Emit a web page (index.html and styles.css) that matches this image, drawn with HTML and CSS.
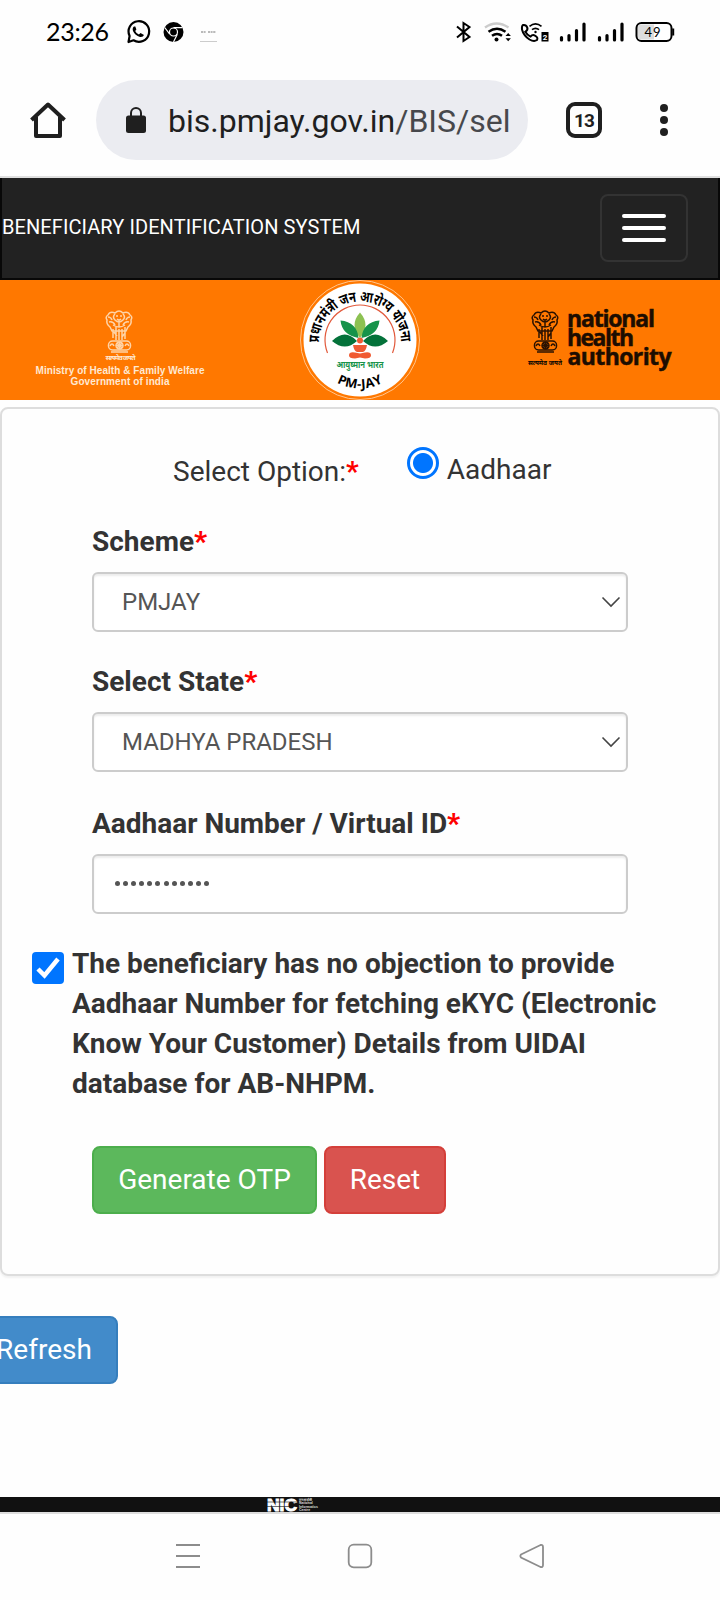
FILE: index.html
```
<!doctype html>
<html lang="en">
<head>
<meta charset="utf-8">
<title>Beneficiary Identification System</title>
<link rel="stylesheet" href="styles.css">
</head>
<body>
<div class="statusbar">
	<span class="clock">23:26</span>
	<svg class="status-left" width="94" height="26" viewBox="126 19 94 26">
		<!-- whatsapp -->
		<path d="M128.500 42 L129.600 36 A10.300 10.300 0 1 1 133.500 40.300 Z" fill="none" stroke="#000" stroke-width="2.200" stroke-linejoin="round"/>
		<path d="M134 26.500 q-2 1.500 -1 4.500 q2 4.500 7 6 q3 .5 4 -2 l-3.500 -2 -1.600 1.500 q-2.600 -1 -3.700 -3.600 l1.200 -1.500 -1.100 -2.900z"/>
		<!-- chrome -->
		<circle cx="173.500" cy="32" r="10"/>
		<circle cx="173.500" cy="32" r="4" fill="none" stroke="#fff" stroke-width="1.200"/>
		<path d="M173.500 27.600 H182.500 M169.700 34.200 L164.700 27.500 M177.300 34.300 L173.500 42" stroke="#fff" stroke-width="1.200"/>
		<path d="M201 32 h5 M208 32 h8" stroke="#777" stroke-width="1.200" stroke-dasharray="2 .6"/>
		<path d="M200 41.500 h17" stroke="#ccc"/>
	</svg>
	<svg class="status-right" width="222" height="26" viewBox="454 19 222 26">
		<path d="M457 26.500 L469.500 37 L463.500 41 V23 L469.500 27 L457 37.500" fill="none" stroke="#000" stroke-width="2"/>
		<!-- wifi -->
		<g fill="none" stroke-width="2.400">
			<path d="M485 27.500 Q496.500 19.500 508.500 27.500" stroke="#ccc"/>
			<path d="M488.500 31.800 Q497 25.500 505.500 31.800" stroke="#000"/>
			<path d="M492 35.800 Q497 32 502 35.800" stroke="#000"/>
		</g>
		<circle cx="496.500" cy="39.500" r="2"/>
		<path d="M505.500 36 l2.700 -3 2.700 3z M505.500 38.200 l2.700 3 2.700 -3z"/>
		<!-- wifi calling -->
		<path d="M523 25 q3 -.6 4.300 2.600 q.8 2.400 -2 4.200 q1.800 3.200 5.200 4.800 q2 -2.500 4.500 -1 q3.400 1.800 2 4.400 q-3 2 -7.500 -.5 q-6 -4 -7.500 -10 q-.4 -3.500 1 -4.500z" fill="none" stroke="#000" stroke-width="2"/>
		<path d="M529.500 26.300 Q535.500 21.500 541.500 26.300 M532 29.700 Q535.500 27 539 29.700" fill="none" stroke="#000" stroke-width="1.700"/>
		<circle cx="535.500" cy="32" r="1.200"/>
		<rect x="541.500" y="32" width="7" height="9.500"/>
		<text x="542.800" y="40" class="sim">2</text>
		<g stroke="#000" stroke-width="3.200" stroke-linecap="round">
			<path d="M561.500 37.500 V40 M569 35.500 V40 M576.500 30.500 V40 M584 24 V40"/>
			<path d="M599.500 37.500 V40 M607 35.500 V40 M614.500 30.500 V40 M622 24 V40"/>
		</g>
		<rect x="636.500" y="23" width="35" height="18" rx="5" fill="#fff" stroke="#000" stroke-width="2"/>
		<path d="M641 24.500 h13 v15 h-13 q-3 0 -3 -3 v-9 q0 -3 3 -3z" fill="#ddd"/>
		<path d="M673.200 28.500 V35.500" stroke="#000" stroke-width="2"/>
		<text x="644.500" y="36.500" class="battery" textLength="16">49</text>
	</svg>
</div>

<div class="browserbar">
	<svg class="home" width="36" height="36" viewBox="0 0 36 36">
		<path d="M1.500 18 L18 2.500 L34.500 18 M6 15 V34 H30 V15" fill="none" stroke="#1f1f1f" stroke-width="4" stroke-linejoin="round"/>
	</svg>
	<div class="url">
		<svg width="20" height="26" viewBox="0 0 20 26">
			<path d="M5 10 V6 a5 5 0 0 1 10 0 V10" fill="none" stroke="#1f1f1f" stroke-width="2"/>
			<rect y="8.500" width="20" height="17.500" rx="2.500" fill="#1f1f1f"/>
		</svg>
		<span class="address">bis.pmjay.gov.in<span class="path">/BIS/sel</span></span>
	</div>
	<div class="tabs">13</div>
	<div class="more"><i></i><i></i><i></i></div>
</div>

<div class="navbar">
	<span class="brand">BENEFICIARY IDENTIFICATION SYSTEM</span>
	<div class="toggle"><i></i><i></i><i></i></div>
</div>

<svg class="banner" width="720" height="120" viewBox="0 280 720 120">
	<defs>
		<path id="arcTop" d="M319 342.500 A41 41 0 0 1 401 342.500"/>
		<path id="arcBottom" d="M311.500 340 A48.500 48.500 0 0 0 408.500 340"/>
		<!-- lion capital -->
		<g id="emblem" fill="none" stroke-width="1.500">
			<path d="M10 3 q4 -4 8 0 q5 -2 7 2 q3 2 1 5 q1 4 -3 7 l-2 4 h-14 l-2 -4 q-4 -3 -3 -7 q-2 -3 1 -5 q2 -4 7 -2z"/>
			<path d="M10 4 q-3 3 0 6 q4 4 8 0 q3 -3 0 -6 M11 6 h2 M15 6 h2 M12 9 q2 2 4 0 M3 7 q3 0 4 3 M25 7 q-3 0 -4 3 M4 12 q4 -1 6 3 M24 12 q-4 -1 -6 3 M8 15 q6 4 12 0 M14 10 v7"/>
			<path d="M8 19 v9 M11 17 v13 M14 19 v11 M17 19 v11 M20 17 v12 M9 22 l3 4 M20 23 l-3 4"/>
			<rect x="3.500" y="31" width="22" height="9" rx="4"/>
			<circle cx="14.500" cy="35.500" r="3.500"/>
			<path d="M14.500 32 v7 M11 35.500 h7 M12 33 l5 5 M17 33 l-5 5 M5 36 q2 -4 4 0 M20 36 q2 -4 4 0 M6 42 h17"/>
		</g>
	</defs>
	<rect y="280" width="720" height="120" fill="#ff7800"/>

	<g fill="#ffe9d2" text-anchor="middle">
		<use href="#emblem" x="105" y="310" stroke="#ffd3a6"/>
		<text x="120.500" y="360" class="motto" textLength="30">सत्यमेव जयते</text>
		<text x="120" y="374" class="ministry" textLength="169">Ministry of Health &amp; Family Welfare</text>
		<text x="120" y="384.500" class="ministry" textLength="99">Government of india</text>
	</g>

	<circle cx="360" cy="340" r="59.500" fill="none" stroke="#ffc58e" stroke-width="1"/>
	<circle cx="360" cy="340" r="56.500" fill="#fff"/>
	<path d="M327.500 353 A35 35 0 1 1 392.500 353" fill="none" stroke="#e2593b" stroke-width="1.200"/>
	<text class="yojana"><textPath href="#arcTop" textLength="128" lengthAdjust="spacingAndGlyphs">प्रधानमंत्री जन आरोग्य योजना</textPath></text>
	<text class="pmjay"><textPath href="#arcBottom" startOffset="50%" text-anchor="middle">PM-JAY</textPath></text>
	<path d="M360 312.500 Q349 325 360 338 Q371 325 360 312.500z" fill="#8cc152"/>
	<path d="M358.500 338 Q357 322 340.500 320.500 Q342 335 358.500 338z M361.500 338 Q363 322 379.500 320.500 Q378 335 361.500 338z" fill="#16934a"/>
	<path d="M357 341 Q345 328 332 341 Q345 352 357 341z M363 341 Q375 328 388 341 Q375 352 363 341z" fill="#04723a"/>
	<circle cx="360" cy="340.500" r="3" fill="#f05a32"/>
	<path d="M353 345 h14 q-1 6 -4 7 h-6 q-3 -1 -4 -7z M349 355.500 q0 -4 6 -3 l5 1 5 -1 q6 -1 6 3 q0 3 -6 3 l-5 -1 -5 1 q-6 0 -6 -3z" fill="#f05a32"/>
	<text x="360" y="368" class="bharat" text-anchor="middle" textLength="47" lengthAdjust="spacingAndGlyphs">आयुष्मान भारत</text>

	<use href="#emblem" x="531" y="310" stroke="#2a1200"/>
	<text x="545" y="365" class="motto" text-anchor="middle" textLength="34" lengthAdjust="spacingAndGlyphs">सत्यमेव जयते</text>
	<g class="nha">
		<text x="567" y="327" textLength="88">national</text>
		<text x="567" y="346" textLength="67">health</text>
		<text x="567.500" y="365" textLength="104">authority</text>
	</g>
</svg>

<form class="panel">
	<div class="option">
		<span>Select Option:<b class="req">*</b></span>
		<span class="radio"></span>
		<span class="radio-label">Aadhaar</span>
	</div>
	<div class="group">
		<label>Scheme<b class="req">*</b></label>
		<div class="control select">PMJAY
			<svg width="20" height="12" viewBox="0 0 20 12"><path d="M1.500 1.500 L10 10 L18.500 1.500"/></svg>
		</div>
	</div>
	<div class="group state">
		<label>Select State<b class="req">*</b></label>
		<div class="control select">MADHYA PRADESH
			<svg width="20" height="12" viewBox="0 0 20 12"><path d="M1.500 1.500 L10 10 L18.500 1.500"/></svg>
		</div>
	</div>
	<div class="group">
		<label>Aadhaar Number / Virtual ID<b class="req">*</b></label>
		<div class="control password"><i></i><i></i><i></i><i></i><i></i><i></i><i></i><i></i><i></i><i></i><i></i><i></i></div>
	</div>
	<div class="consent">
		<svg width="32" height="32" viewBox="0 0 32 32">
			<rect width="32" height="32" rx="4" fill="#0075ff"/>
			<path d="M6 17 L12.500 23.500 L26 7" fill="none" stroke="#fff" stroke-width="4.500"/>
		</svg>
		<p>The beneficiary has no objection to provide<br>Aadhaar Number for fetching eKYC (Electronic<br>Know Your Customer) Details from UIDAI<br>database for AB-NHPM.</p>
	</div>
	<div class="buttons">
		<button type="button" class="btn success">Generate OTP</button>
		<button type="button" class="btn danger">Reset</button>
	</div>
</form>

<button type="button" class="btn primary">Refresh</button>

<div class="footer">
	<svg width="56" height="15" viewBox="0 0 56 15">
		<text x="1" y="13.500" class="nic" textLength="30" lengthAdjust="spacingAndGlyphs">NIC</text>
		<path d="M0 5 h32 M0 9.500 h32" stroke="#111" stroke-width=".6"/>
		<g class="nic-small">
			<text x="33" y="3.500">एनआईसी</text>
			<text x="33" y="7">National</text>
			<text x="33" y="10.500">Informatics</text>
			<text x="33" y="14">Centre</text>
		</g>
	</svg>
</div>

<div class="softkeys">
	<svg width="26" height="26" viewBox="0 0 26 26"><path d="M1 2 H25 M1 13 H25 M1 24 H25"/></svg>
	<svg width="26" height="26" viewBox="0 0 26 26"><rect x="1.700" y="1.700" width="22.600" height="22.600" rx="5"/></svg>
	<svg width="26" height="26" viewBox="0 0 26 26"><path d="M2 11.500 L21.500 2 Q24 1.500 24 4 V22 Q24 24.500 21.500 24 L2 14.500 Q.8 13 2 11.500z"/></svg>
</div>
</body>
</html>
```
FILE: styles.css
```
* {box-sizing: border-box;}
body {
	margin: 0;
	width: 720px;
	height: 1600px;
	overflow: hidden;
	background: #fefefe;
	color: #333;
	font: 28px/40px Roboto, "Liberation Sans", sans-serif;
}
svg {display: block; flex: none;}
/* ---------- status bar ---------- */
.statusbar {
	display: flex;
	align-items: center;
	height: 64px;
	padding: 0 44px 0 46px;
	color: #000;
}
.clock {
	width: 80px;
	margin-top: -2px;
	font-family: Lato, Roboto, sans-serif;
	font-size: 25px;
	letter-spacing: -0.3px;
	white-space: nowrap;
}
.status-right {margin-left: auto;}
.sim {font: bold 8px Roboto, sans-serif; fill: #fff;}
.battery {font: 13px Lato, sans-serif;}
/* ---------- browser bar ---------- */
.browserbar {
	display: flex;
	align-items: center;
	height: 114px;
	border-bottom: 2px solid #e0e0e0;
	padding-left: 30px;
}
.url {
	display: flex;
	align-items: center;
	width: 432px;
	height: 80px;
	margin-left: 30px;
	padding-left: 30px;
	border-radius: 40px;
	background: #ebecf1;
}
.address {
	margin: 2px 0 0 22px;
	color: #1f1f1f;
	font-size: 32px;
	white-space: nowrap;
}
.path {color: #47484c;}
.tabs {
	width: 36px;
	height: 36px;
	margin-left: 38px;
	border: 4px solid #1f1f1f;
	border-radius: 9px;
	color: #1f1f1f;
	font-size: 19px;
	font-weight: bold;
	line-height: 29px;
	letter-spacing: -0.8px;
	text-align: center;
}
.more {
	display: flex;
	flex-direction: column;
	gap: 4px;
	margin-left: 58px;
}
.more i {
	width: 8px;
	height: 8px;
	border-radius: 50%;
	background: #1f1f1f;
}
/* ---------- page header ---------- */
.navbar {
	display: flex;
	justify-content: space-between;
	height: 102px;
	padding: 14px 30px 0 0;
	background: #222;
	border: solid #080808;
	border-width: 0 2px 2px;
}
.brand {
	padding-top: 15px;
	color: #fff;
	font-size: 20px;
	letter-spacing: 0.08px;
}
.toggle {
	display: flex;
	flex-direction: column;
	gap: 8px;
	width: 88px;
	height: 68px;
	margin-top: 2px;
	padding: 18px 20px;
	border: 2px solid #333;
	border-radius: 8px;
}
.toggle i {
	height: 4px;
	border-radius: 2px;
	background: #fff;
}
.ministry {font: bold 10px "Liberation Sans", sans-serif;}
.motto {font: bold 7px "Noto Sans Devanagari", "Noto Sans", sans-serif;}
.yojana {font: bold 15px "Noto Sans Devanagari", "Noto Sans", sans-serif;}
.bharat {font: bold 9.500px "Noto Sans Devanagari", "Noto Sans", sans-serif; fill: #16934a;}
.pmjay {font: bold 13px "Open Sans", sans-serif; letter-spacing: 0.4px;}
.nha {
	font: bold 23px "Open Sans", sans-serif;
	fill: #1c0d00;
	stroke: #1c0d00;
	stroke-width: 0.5px;
}
/* ---------- form ---------- */
.panel {
	height: 869px;
	margin-top: 7px;
	padding: 43px 90px 0;
	border: 2px solid #ddd;
	border-radius: 8px;
	box-shadow: 0 2px 2px rgba(0, 0, 0, 0.05);
}
.req {color: #f00;}
.option {
	display: flex;
	height: 40px;
	padding-left: 81px;
	margin-bottom: 30px;
}
.radio {
	width: 32px;
	height: 32px;
	margin: -5px 8px 0 48px;
	border: 3px solid #0075ff;
	border-radius: 50%;
	background: radial-gradient(circle, #0075ff 9.500px, #fff 10.500px);
}
.radio-label {margin-top: -2px;}
.group {margin-bottom: 30px;}
.state {margin-bottom: 32px;}
label {
	display: block;
	margin-bottom: 10px;
	font-weight: bold;
}
.control {
	display: flex;
	align-items: center;
	width: 536px;
	height: 60px;
	border: 2px solid #ccc;
	border-radius: 6px;
	background: #fff;
	box-shadow: inset 0 2px 2px rgba(0, 0, 0, 0.075);
	color: #555;
	font-size: 24px;
}
.select {
	justify-content: space-between;
	padding: 0 5px 0 28px;
}
.select path {
	fill: none;
	stroke: #444;
	stroke-width: 1.600;
}
.password {
	gap: 3.100px;
	padding: 0 0 2px 21px;
}
.password i {
	width: 5px;
	height: 5px;
	border-radius: 50%;
	background: #555;
}
.consent {
	display: flex;
	gap: 8px;
	margin-left: -60px;
	font-weight: bold;
}
.consent svg {margin-top: 8px;}
.consent p {
	margin: 0;
	white-space: nowrap;
}
.buttons {
	display: flex;
	gap: 7px;
	margin-top: 42px;
}
.btn {
	height: 68px;
	padding: 0;
	border: 2px solid;
	border-radius: 8px;
	color: #fff;
	font: 28px/40px Roboto, "Liberation Sans", sans-serif;
}
.success {width: 225px; background: #5cb85c; border-color: #4cae4c;}
.danger {width: 122px; background: #d9534f; border-color: #d43f3a;}
.primary {
	display: block;
	width: 148px;
	margin: 40px 0 0 -30px;
	background: #428bca;
	border-color: #357ebd;
}
/* ---------- footer ---------- */
.footer {
	height: 17px;
	margin-top: 113px;
	padding-left: 266px;
	background: #111;
	border-bottom: 2px solid #ddd;
}
.nic {font: bold 16px "Liberation Sans", sans-serif; fill: #fff; stroke: #fff;}
.nic-small {font: bold 3.500px "Liberation Sans", sans-serif; fill: #ddd;}
.softkeys {
	display: flex;
	justify-content: space-between;
	padding: 29px 175px 0;
}
.softkeys svg {
	fill: none;
	stroke: #8c8c8c;
	stroke-width: 1.800;
}
```
